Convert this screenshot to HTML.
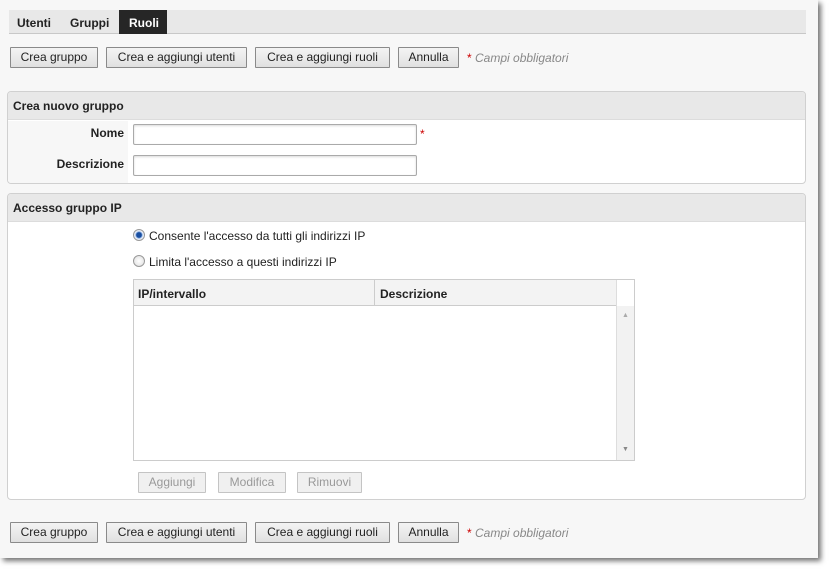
<!DOCTYPE html>
<html><head><meta charset="utf-8"><style>
*{box-sizing:border-box;margin:0;padding:0}
body{width:831px;height:571px;background:#fff;font-family:"Liberation Sans",Arial,sans-serif;font-size:12px;color:#222;position:relative;overflow:hidden}
#page{position:absolute;left:0;top:0;width:818px;height:558px;background:#f7f7f7;box-shadow:3px 3px 5px rgba(0,0,0,.55)}
.a{position:absolute}
.btn{position:absolute;height:21px;border:1px solid #8a8a8a;background:linear-gradient(#f4f4f4,#e0e0e0);font-size:12px;line-height:19px;text-align:center;color:#222;border-radius:1px}
.dis{border-color:#c4c4c4;color:#999;background:#f0f0f0}
.req{position:absolute;font-size:12px;color:#888;font-style:italic}
.req b{color:#c00;font-style:normal;font-weight:normal}
.panel{position:absolute;left:7px;width:799px;border:1px solid #d0d0d0;border-radius:4px;background:#fff;overflow:hidden}
.ph{height:28px;background:#e8e8e8;font-weight:bold;line-height:28px;padding-left:5px;border-bottom:1px solid #dcdcdc}
.inp{position:absolute;height:21px;width:284px;border:1px solid #aaa;border-radius:2px;background:#fff;box-shadow:inset 0 1px 2px rgba(0,0,0,.15)}
.lbl{position:absolute;font-weight:bold;text-align:right;width:120px}
.radio{position:absolute;width:12px;height:12px;border-radius:50%;border:1px solid #999;background:radial-gradient(#fff,#ddd)}
</style></head><body>
<div id="page">
 <div class="a" style="left:9px;top:10px;width:797px;height:24px;background:#e8e8e8;border-bottom:1px solid #c8c8c8"></div>
 <div class="a" style="left:17px;top:16px;font-weight:bold">Utenti</div>
 <div class="a" style="left:70px;top:16px;font-weight:bold">Gruppi</div>
 <div class="a" style="left:119px;top:10px;width:48px;height:24px;background:#262626;color:#fff;font-weight:bold;padding:6px 0 0 10px">Ruoli</div>

 <div class="btn" style="left:10px;top:47px;width:88px">Crea gruppo</div>
 <div class="btn" style="left:106px;top:47px;width:141px">Crea e aggiungi utenti</div>
 <div class="btn" style="left:255px;top:47px;width:135px">Crea e aggiungi ruoli</div>
 <div class="btn" style="left:398px;top:47px;width:61px">Annulla</div>
 <div class="req" style="left:467px;top:51px"><b>*</b> Campi obbligatori</div>

 <div class="panel" style="top:91px;height:93px">
  <div class="ph">Crea nuovo gruppo</div>
  <div class="a" style="left:0;top:29px;width:120px;height:64px;background:#f7f7f7"></div>
  <div class="lbl" style="left:-4px;top:34px">Nome</div>
  <div class="inp" style="left:125px;top:32px"></div>
  <div class="a" style="left:412px;top:35px;color:#c00">*</div>
  <div class="lbl" style="left:-4px;top:65px">Descrizione</div>
  <div class="inp" style="left:125px;top:63px"></div>
 </div>

 <div class="panel" style="top:193px;height:307px">
  <div class="ph">Accesso gruppo IP</div>
  <div class="radio" style="left:125px;top:35px;background:radial-gradient(#1a4fa0 0 2.5px,#6f9ad8 3px,#e8eef8 4px)"></div>
  <div class="a" style="left:141px;top:35px">Consente l'accesso da tutti gli indirizzi IP</div>
  <div class="radio" style="left:125px;top:61px"></div>
  <div class="a" style="left:141px;top:61px">Limita l'accesso a questi indirizzi IP</div>
  <div class="a" style="left:125px;top:85px;width:502px;height:182px;border:1px solid #ccc;background:#fff">
   <div class="a" style="left:0;top:0;width:482px;height:26px;background:#f3f3f3;border-bottom:1px solid #ccc"></div>
   <div class="a" style="left:240px;top:0;width:1px;height:26px;background:#ccc"></div>
   <div class="a" style="left:482px;top:0;width:1px;height:180px;background:#ddd"></div>
   <div class="a" style="left:483px;top:26px;width:17px;height:154px;background:#f2f2f2"></div>
   <div class="a" style="left:488px;top:32px;font-size:7px;color:#aaa">▲</div>
   <div class="a" style="left:488px;top:166px;font-size:7px;color:#888">▼</div>
   <div class="a" style="left:4px;top:7px;font-weight:bold">IP/intervallo</div>
   <div class="a" style="left:246px;top:7px;font-weight:bold">Descrizione</div>
  </div>
  <div class="btn dis" style="left:130px;top:278px;width:68px">Aggiungi</div>
  <div class="btn dis" style="left:210px;top:278px;width:68px">Modifica</div>
  <div class="btn dis" style="left:289px;top:278px;width:65px">Rimuovi</div>
 </div>

 <div class="btn" style="left:10px;top:522px;width:88px">Crea gruppo</div>
 <div class="btn" style="left:106px;top:522px;width:141px">Crea e aggiungi utenti</div>
 <div class="btn" style="left:255px;top:522px;width:135px">Crea e aggiungi ruoli</div>
 <div class="btn" style="left:398px;top:522px;width:61px">Annulla</div>
 <div class="req" style="left:467px;top:526px"><b>*</b> Campi obbligatori</div>
</div>
</body></html>
